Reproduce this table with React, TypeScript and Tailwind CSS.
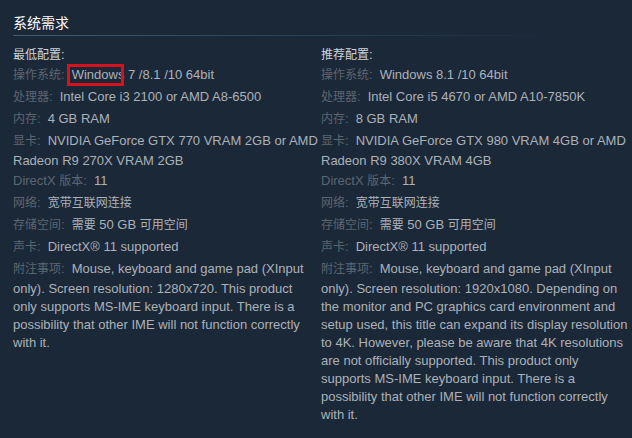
import React from "react";

type Row = { label: React.ReactNode; value: React.ReactNode };

const Cjk = ({ children }: { children: React.ReactNode }) => (
  <span className="text-[12px]">{children}</span>
);

const Lines = ({ lines }: { lines: string[] }) => (
  <>
    {lines.map((l, i) => (
      <React.Fragment key={i}>
        {i > 0 && <br />}
        {l}
      </React.Fragment>
    ))}
  </>
);

function Item({ label, value }: Row) {
  return (
    <li className="leading-[18px]">
      <span className="inline-block leading-[22px] text-[#5b6670]">
        {label}:
      </span>
      <span className="ml-[7px] whitespace-nowrap text-[#acb2b8]">{value}</span>
    </li>
  );
}

function Column({ title, rows }: { title: string; rows: Row[] }) {
  return (
    <div>
      <div className="leading-[18px] text-[#d0d3d6]">
        <Cjk>{title}</Cjk>:
      </div>
      <ul className="flex flex-col">
        {rows.map((r, i) => (
          <Item key={i} label={r.label} value={r.value} />
        ))}
      </ul>
    </div>
  );
}

const dxLabel = (
  <>
    DirectX <Cjk>版本</Cjk>
  </>
);

const storage = (
  <>
    <Cjk>需要</Cjk> 50 GB <Cjk>可用空间</Cjk>
  </>
);

export default function App() {
  const left: Row[] = [
    {
      label: <Cjk>操作系统</Cjk>,
      value: (
        <>
          <span className="relative">
            Windows
            <span className="absolute left-[-5px] top-[-3px] h-[22px] w-[57px] border-[3px] border-[#d8121c]" />
          </span>{" "}
          7 /8.1 /10 64bit
        </>
      ),
    },
    { label: <Cjk>处理器</Cjk>, value: "Intel Core i3 2100 or AMD A8-6500" },
    { label: <Cjk>内存</Cjk>, value: "4 GB RAM" },
    {
      label: <Cjk>显卡</Cjk>,
      value: <Lines lines={["NVIDIA GeForce GTX 770 VRAM 2GB or AMD", "Radeon R9 270X VRAM 2GB"]} />,
    },
    { label: dxLabel, value: "11" },
    { label: <Cjk>网络</Cjk>, value: <Cjk>宽带互联网连接</Cjk> },
    { label: <Cjk>存储空间</Cjk>, value: storage },
    { label: <Cjk>声卡</Cjk>, value: "DirectX® 11 supported" },
    {
      label: <Cjk>附注事项</Cjk>,
      value: (
        <Lines
          lines={[
            "Mouse, keyboard and game pad (XInput",
            "only). Screen resolution: 1280x720. This product",
            "only supports MS-IME keyboard input. There is a",
            "possibility that other IME will not function correctly",
            "with it.",
          ]}
        />
      ),
    },
  ];

  const right: Row[] = [
    { label: <Cjk>操作系统</Cjk>, value: "Windows 8.1 /10 64bit" },
    { label: <Cjk>处理器</Cjk>, value: "Intel Core i5 4670 or AMD A10-7850K" },
    { label: <Cjk>内存</Cjk>, value: "8 GB RAM" },
    {
      label: <Cjk>显卡</Cjk>,
      value: <Lines lines={["NVIDIA GeForce GTX 980 VRAM 4GB or AMD", "Radeon R9 380X VRAM 4GB"]} />,
    },
    { label: dxLabel, value: "11" },
    { label: <Cjk>网络</Cjk>, value: <Cjk>宽带互联网连接</Cjk> },
    { label: <Cjk>存储空间</Cjk>, value: storage },
    { label: <Cjk>声卡</Cjk>, value: "DirectX® 11 supported" },
    {
      label: <Cjk>附注事项</Cjk>,
      value: (
        <Lines
          lines={[
            "Mouse, keyboard and game pad (XInput",
            "only). Screen resolution: 1920x1080. Depending on",
            "the monitor and PC graphics card environment and",
            "setup used, this title can expand its display resolution",
            "to 4K. However, please be aware that 4K resolutions",
            "are not officially supported. This product only",
            "supports MS-IME keyboard input. There is a",
            "possibility that other IME will not function correctly",
            "with it.",
          ]}
        />
      ),
    },
  ];

  return (
    <div className="min-h-[438px] w-[632px] overflow-hidden bg-[#1b2838] font-['Liberation_Sans','Noto_Sans_CJK_SC',sans-serif] text-[13px]">
      <div className="pl-[13px] pt-[14px]">
        <h2 className="text-[14px] leading-[18px] text-white">系统需求</h2>
        <div className="mt-[3px] h-px w-[550px] bg-linear-to-r from-[#3e6078] via-[#2a4356] to-transparent" />
        <div className="mt-[10px] grid grid-cols-[308px_311px]">
          <Column title="最低配置" rows={left} />
          <Column title="推荐配置" rows={right} />
        </div>
      </div>
    </div>
  );
}
